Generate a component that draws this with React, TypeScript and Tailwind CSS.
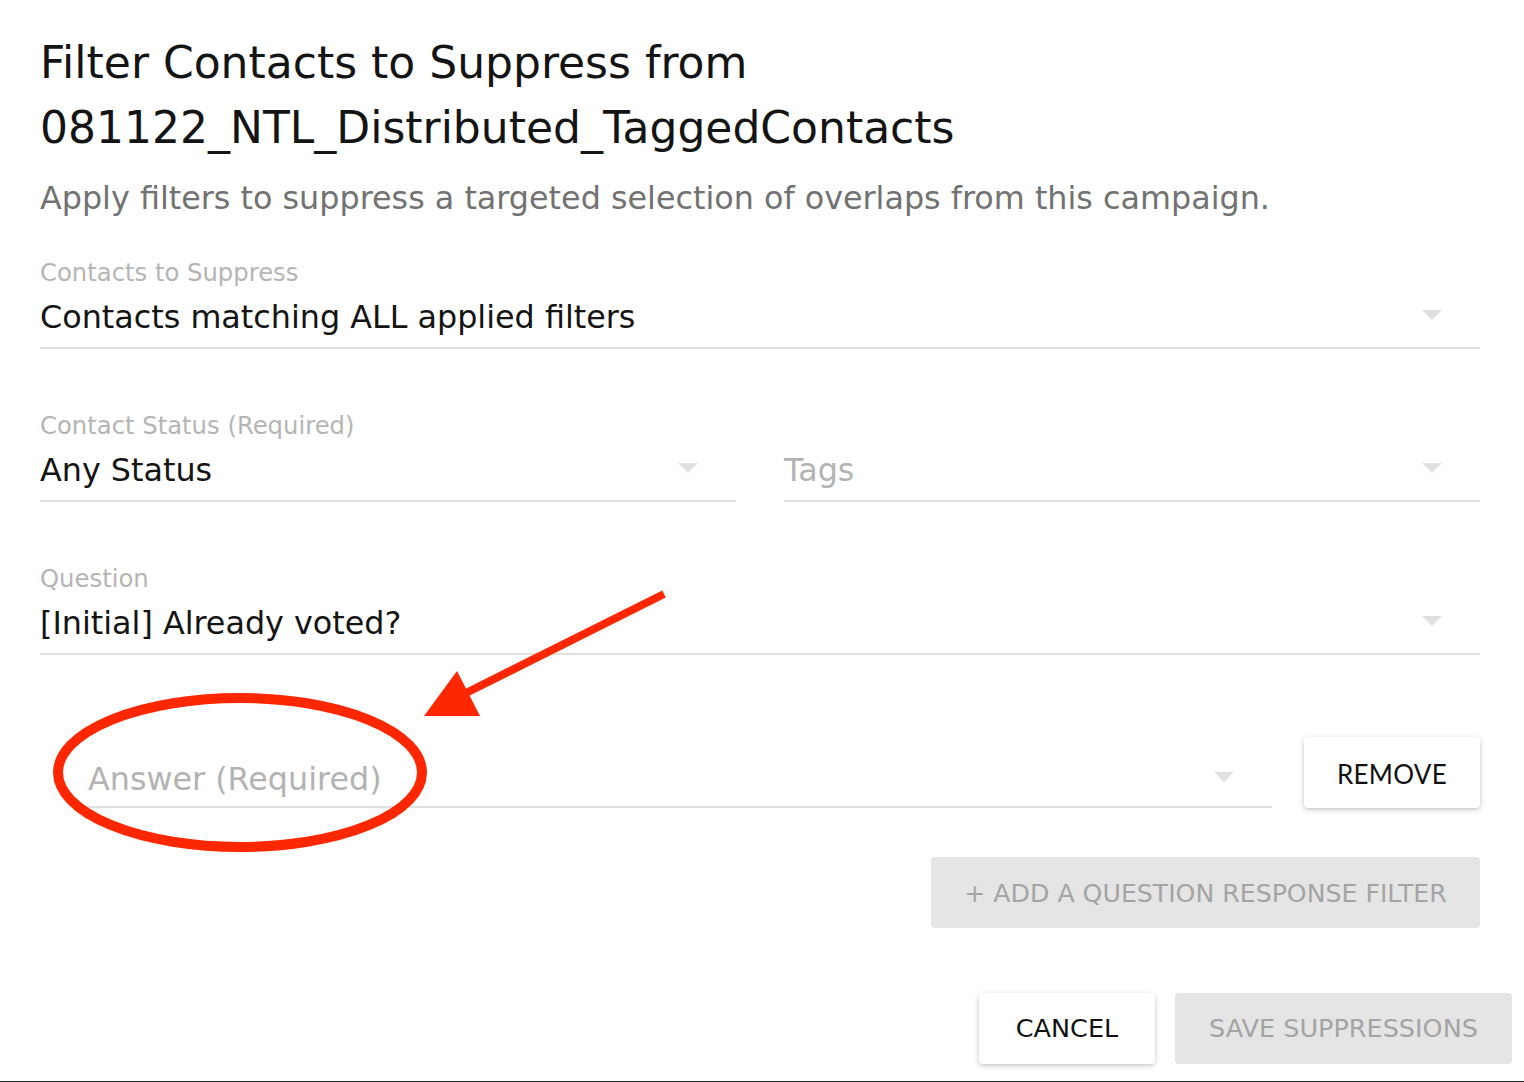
import React from "react";

function Arrow() {
  return (
    <svg width="20" height="10" viewBox="0 0 20 10" className="mr-[38px] mb-[4px] shrink-0">
      <polygon points="0,0 20,0 10,10" fill="#e0e0e0" />
    </svg>
  );
}

function Field({
  label,
  value,
  placeholder,
  className = "",
}: {
  label?: string;
  value?: string;
  placeholder?: string;
  className?: string;
}) {
  return (
    <div className={"flex flex-col border-b-2 border-[#e0e0e0] " + className}>
      <div className="h-[30px] text-[24.3px] leading-[30px] text-[#b5b5b5] whitespace-nowrap">{label}</div>
      <div className="mt-[7px] mb-[8px] h-[44px] flex items-center">
        {value ? (
          <span className="flex-1 text-[31.8px] leading-[44px] text-[#141414] whitespace-nowrap">{value}</span>
        ) : (
          <span className="flex-1 text-[31.8px] leading-[44px] text-[#b3b3b3] whitespace-nowrap">{placeholder}</span>
        )}
        <Arrow />
      </div>
    </div>
  );
}

export default function App() {
  return (
    <div className="relative w-[1524px] h-[1082px] bg-white overflow-hidden border-b border-[#1f2727] font-['DejaVu_Sans',sans-serif]">
      <div className="pl-[40px] pr-[44px] pt-[30px]">
        <h1 className="text-[44px] leading-[65px] text-[#141414] font-normal whitespace-nowrap">
          Filter Contacts to Suppress from
          <br />
          081122_NTL_Distributed_TaggedContacts
        </h1>
        <p className="mt-[18px] text-[31.8px] leading-[40px] text-[#727272] whitespace-nowrap">
          Apply filters to suppress a targeted selection of overlaps from this campaign.
        </p>

        <div className="mt-[40px] flex flex-col gap-[62px]">
          <Field label="Contacts to Suppress" value="Contacts matching ALL applied filters" />
          <div className="grid grid-cols-2 gap-[48px]">
            <Field label="Contact Status (Required)" value="Any Status" />
            <Field placeholder="Tags" />
          </div>
          <Field label="Question" value="[Initial] Already voted?" />
        </div>

        <div className="mt-[82px] flex items-end gap-[32px]">
          <div className="ml-[48px] flex-1 border-b-2 border-[#e0e0e0]">
            <div className="mb-[5px] h-[44px] flex items-center">
              <span className="flex-1 text-[31.8px] leading-[44px] text-[#b3b3b3] whitespace-nowrap">Answer (Required)</span>
              <Arrow />
            </div>
          </div>
          <button className="w-[176px] h-[71px] pt-[3px] rounded-[4px] bg-white shadow-[0_2px_6px_rgba(0,0,0,0.16),0_1px_3px_rgba(0,0,0,0.10)] font-['Lato',sans-serif] text-[26px] text-[#111] tracking-[0.3px]">
            REMOVE
          </button>
        </div>

        <div className="mt-[49px] flex justify-end">
          <button className="w-[549px] h-[71px] pt-[2px] rounded-[4px] bg-[#e5e5e5] text-[25.2px] text-[#a4a4a4] whitespace-nowrap">
            + ADD A QUESTION RESPONSE FILTER
          </button>
        </div>
      </div>

      <div className="mt-[65px] pr-[12px] flex justify-end gap-[20px]">
        <button className="w-[176px] h-[71px] rounded-[4px] bg-white shadow-[0_2px_6px_rgba(0,0,0,0.16),0_1px_3px_rgba(0,0,0,0.10)] text-[25.5px] text-[#111]">
          CANCEL
        </button>
        <button className="w-[337px] h-[71px] rounded-[4px] bg-[#e5e5e5] text-[25.5px] text-[#a4a4a4] whitespace-nowrap">
          SAVE SUPPRESSIONS
        </button>
      </div>

      <svg
        className="absolute left-0 top-0 pointer-events-none"
        width="1524"
        height="1082"
        viewBox="0 0 1524 1082"
      >
        <ellipse cx="240" cy="772.5" rx="182" ry="74.5" fill="none" stroke="#fe2700" strokeWidth="10" />
        <line x1="664" y1="594" x2="462" y2="695" stroke="#fe2700" strokeWidth="8" />
        <polygon points="424,716 457,671 480,716" fill="#fe2700" />
      </svg>
    </div>
  );
}
